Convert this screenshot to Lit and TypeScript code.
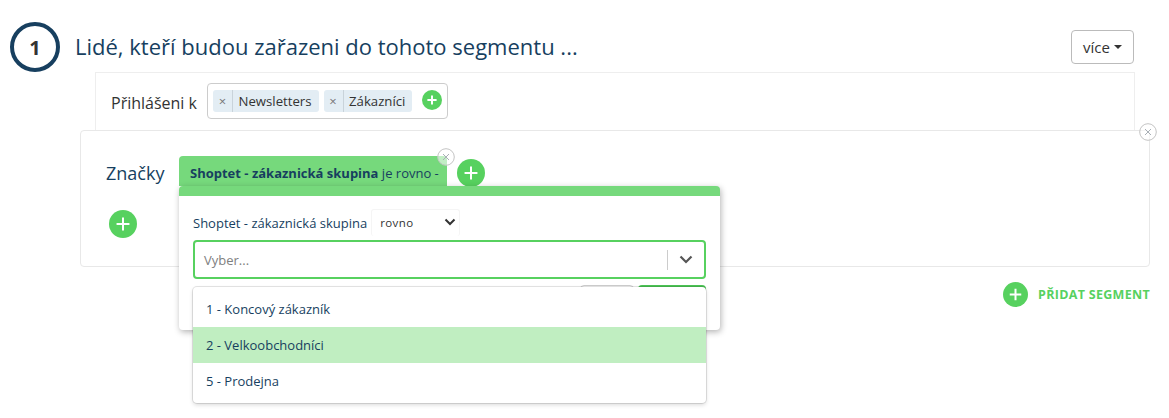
import { LitElement, html, css } from "lit";
import { customElement } from "lit/decorators.js";

const plus = (size: number, stroke: number) => {
  const a = size * 0.27, b = size - a, m = size / 2;
  return html`<svg class="plus" width=${size} height=${size} viewBox="0 0 ${size} ${size}"><circle cx=${m} cy=${m} r=${m} fill="#57d15f"/><path d="M${a} ${m}H${b}M${m} ${a}V${b}" stroke="#fff" stroke-width=${stroke} fill="none"/></svg>`;
};
const closeC = html`<svg width="18" height="18" viewBox="0 0 18 18"><circle cx="9" cy="9" r="8.3" fill="#fff" fill-opacity=".55" stroke="#c4c4c4" stroke-width="1"/><path d="M6 6l6 6M12 6l-6 6" stroke="#a9b0b6" stroke-width="1" fill="none"/></svg>`;

@customElement("app-root")
export class AppRoot extends LitElement {
  static styles = css`
    :host { display: block; width: 1169px; height: 418px; position: relative; overflow: hidden; background: #fff; font-family: "Open Sans", sans-serif; color: #173f5f; }
    * { box-sizing: border-box; }
    svg { display: block; flex: none; }
    .head { display: flex; align-items: flex-start; padding: 22px 35px 0 10px; height: 72px; }
    .num { width: 50px; height: 50px; border: 4px solid #173f5f; border-radius: 50%; display: flex; align-items: center; justify-content: center; font-size: 20px; font-weight: 700; color: #333; }
    .title { font-size: 22px; line-height: 27px; margin: 11px 0 0 15px; flex: 1; }
    .more { width: 63px; height: 34px; margin-top: 8px; border: 1px solid #bbb; border-radius: 4px; font-size: 15px; color: #333; display: flex; align-items: center; justify-content: center; gap: 4px; }
    .caret { width: 0; height: 0; border: 4px solid transparent; border-top-color: #333; border-bottom: 0; }
    .p1 { margin: 0 34px 0 95px; height: 58px; border: 1px solid #eee; border-bottom: 0; display: flex; padding: 10px 0 0 15px; }
    .p1 .lab { font-size: 16px; color: #333; line-height: 36px; margin: 2px 10px 0 0; }
    .tags { width: 241px; height: 36px; border: 1px solid #ccc; border-radius: 4px; display: flex; align-items: flex-start; padding: 6px 5px; gap: 5px; }
    .tag { height: 22px; background: #e3edf4; border-radius: 3px; display: flex; font-size: 13.2px; line-height: 22px; color: #333; }
    .tag i { font-style: normal; width: 20px; border-right: 1px solid #c9d3da; text-align: center; color: #777; font-size: 13px; }
    .tag span { padding: 0 7px 0 5.5px; }
    .tags .plus { margin-left: 5px; }
    .p2 { position: relative; margin: 0 19px 0 80px; height: 137px; border: 1px solid #e8e8e8; border-radius: 4px; padding: 25px 0 0 25px; }
    .p2 .x { position: absolute; right: -8px; top: -8px; }
    .zn { font-size: 18px; line-height: 35px; }
    .add { margin: 19px 0 0 3px; }
    .seg { position: absolute; top: 25px; left: 98px; display: flex; align-items: flex-start; }
    .tab { position: relative; width: 268px; height: 30px; background: #76d97c; border-radius: 4px 4px 0 0; padding: 9px 0 0 11px; font-size: 13px; line-height: 17px; white-space: nowrap; }
    .tab .cx { position: absolute; right: -8px; top: -8px; }
    .seg > .plus { margin: 3px 0 0 10px; }
    .more-seg { position: absolute; right: 19px; top: 282px; display: flex; align-items: center; gap: 10px; font-size: 12.5px; font-weight: 700; color: #57d15f; letter-spacing: .3px; }
    .pop { position: absolute; left: 179px; top: 186px; width: 541px; height: 144px; background: #fff; border-top: 10px solid #76d97c; border-radius: 4px; box-shadow: 1px 2px 6px rgba(0,0,0,.3); padding: 14px 14px 0; }
    .row { display: flex; align-items: center; height: 27px; font-size: 13px; margin-top: -1px; }
    .sel { width: 89px; height: 27px; margin-left: 4px; border: 1px solid #f5f5f5; border-bottom: 0; border-radius: 3px; display: flex; align-items: center; justify-content: space-between; padding: 0 3px 2px 8px; font-size: 11.5px; color: #333; letter-spacing: .4px; }
    .input { margin-top: 4px; height: 39px; border: 2px solid #57d15f; border-radius: 4px; display: flex; align-items: center; padding-left: 9px; font-size: 13px; color: #808080; }
    .input span { flex: 1; }
    .input b { width: 1px; height: 20px; background: #ccc; }
    .input svg { margin: 0 11px; }
    .btns { display: flex; justify-content: flex-end; gap: 4px; margin-top: 6px; }
    .btn { height: 30px; border-radius: 4px; }
    .b1 { width: 54px; border: 1px solid #ccc; }
    .b2 { width: 68px; background: #4cc455; }
    .menu { position: absolute; left: 193px; top: 287px; width: 513px; height: 116px; background: #fff; border-radius: 4px; box-shadow: 0 0 0 1px rgba(0,0,0,.1), 0 2px 4px rgba(0,0,0,.15); padding: 4px 0; font-size: 13px; }
    .opt { height: 36px; line-height: 36px; padding-left: 13px; }
    .opt.on { background: #c0eec1; }
  `;
  render() {
    return html`
      <div class="head">
        <div class="num">1</div>
        <div class="title">Lidé, kteří budou zařazeni do tohoto segmentu ...</div>
        <div class="more">více <span class="caret"></span></div>
      </div>
      <div class="p1">
        <div class="lab">Přihlášeni k</div>
        <div class="tags">
          <div class="tag"><i>×</i><span>Newsletters</span></div>
          <div class="tag"><i>×</i><span>Zákazníci</span></div>
          ${plus(20, 2)}
        </div>
      </div>
      <div class="p2">
        <div class="x">${closeC}</div>
        <div class="zn">Značky</div>
        <div class="add">${plus(28, 2)}</div>
        <div class="seg">
          <div class="tab"><b>Shoptet - zákaznická skupina</b> je rovno -<div class="cx">${closeC}</div></div>
          ${plus(28, 2)}
        </div>
      </div>
      <div class="more-seg">${plus(25, 2)}<span>PŘIDAT SEGMENT</span></div>
      <div class="pop">
        <div class="row">Shoptet - zákaznická skupina
          <div class="sel">rovno
            <svg width="12" height="8" viewBox="0 0 12 8"><path d="M1.5 1.5L6 6l4.5-4.5" stroke="#333" stroke-width="2" fill="none"/></svg>
          </div>
        </div>
        <div class="input"><span>Vyber...</span><b></b>
          <svg width="14" height="9" viewBox="0 0 14 9"><path d="M1.5 1.5L7 7l5.5-5.5" stroke="#555" stroke-width="2.2" fill="none"/></svg>
        </div>
        <div class="btns"><div class="btn b1"></div><div class="btn b2"></div></div>
      </div>
      <div class="menu">
        <div class="opt">1 - Koncový zákazník</div>
        <div class="opt on">2 - Velkoobchodníci</div>
        <div class="opt">5 - Prodejna</div>
      </div>
    `;
  }
}
